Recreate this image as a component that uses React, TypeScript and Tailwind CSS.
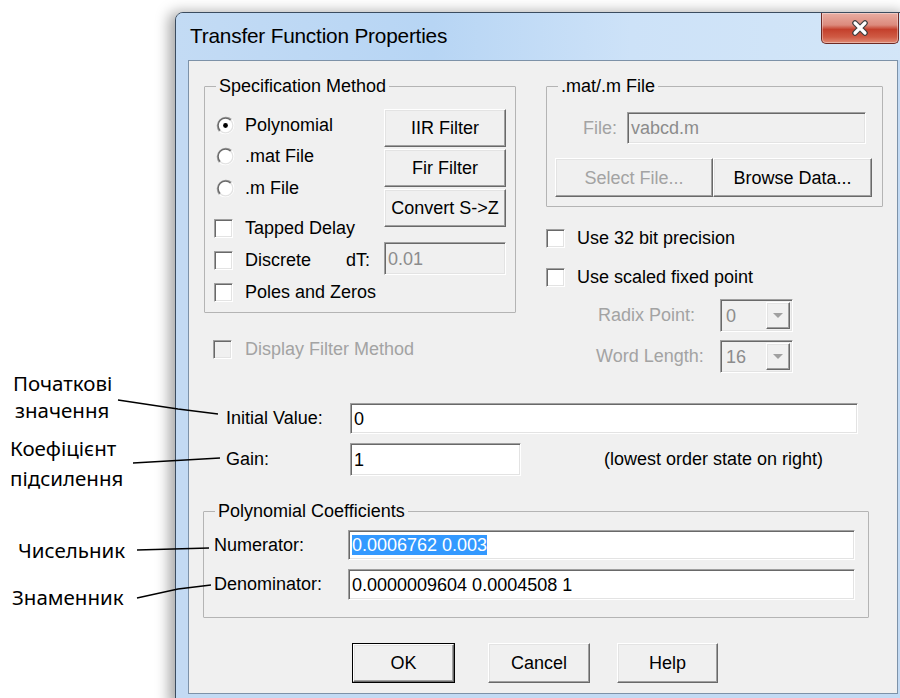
import React from "react";

const face = "font-['Liberation_Sans',Arial,sans-serif]";

const raised =
  "bg-[#f0f0f0] border border-t-white border-l-white border-r-[#696969] border-b-[#696969] shadow-[inset_-1px_-1px_0_#a0a0a0,inset_1px_1px_0_#e3e3e3]";
const sunken =
  "border border-t-[#a0a0a0] border-l-[#a0a0a0] border-r-white border-b-white shadow-[inset_1px_1px_0_#696969,inset_-1px_-1px_0_#e3e3e3]";

type BtnProps = {
  label: string;
  className?: string;
  disabled?: boolean;
};

function Button({ label, className = "", disabled = false }: BtnProps) {
  return (
    <button
      type="button"
      className={`${raised} flex items-center justify-center leading-none ${
        disabled ? "text-[#a3a3a3]" : "text-black"
      } ${className}`}
    >
      {label}
    </button>
  );
}

function Field({
  value,
  className = "",
  disabled = false,
  children,
}: {
  value?: string;
  className?: string;
  disabled?: boolean;
  children?: React.ReactNode;
}) {
  return (
    <div
      className={`${sunken} flex items-center pl-[3px] leading-none ${
        disabled ? "bg-[#f0f0f0] text-[#8c8c8c]" : "bg-white text-black"
      } ${className}`}
    >
      {children ?? value}
    </div>
  );
}

function CheckBox({ disabled = false }: { disabled?: boolean }) {
  return (
    <div
      className={`${sunken} w-[19px] h-[19px] shrink-0 ${
        disabled ? "bg-[#f0f0f0]" : "bg-white"
      }`}
    />
  );
}

function Radio({ checked = false }: { checked?: boolean }) {
  return (
    <svg width="19" height="19" viewBox="0 0 19 19" className="shrink-0">
      <circle cx="9.5" cy="9.5" r="8.5" fill="#fff" />
      <path d="M3.5 15.5A8.5 8.5 0 0 1 15.5 3.5" fill="none" stroke="#a0a0a0" strokeWidth="1.3" />
      <path d="M15.5 3.5A8.5 8.5 0 0 1 3.5 15.5" fill="none" stroke="#ffffff" strokeWidth="1.3" />
      <path d="M4.3 14.7A7.3 7.3 0 0 1 14.7 4.3" fill="none" stroke="#696969" strokeWidth="1.3" />
      <path d="M14.7 4.3A7.3 7.3 0 0 1 4.3 14.7" fill="none" stroke="#e3e3e3" strokeWidth="1.3" />
      {checked && <circle cx="9.5" cy="9.5" r="2.4" fill="#000" />}
    </svg>
  );
}

function Combo({ value }: { value: string }) {
  return (
    <div className={`${sunken} bg-[#f0f0f0] w-[73px] h-[33px] flex items-stretch p-[2px]`}>
      <div className="flex-1 flex items-center pl-[3px] text-[#8c8c8c] leading-none">{value}</div>
      <div className={`${raised} w-[24px] flex items-center justify-center`}>
        <svg width="10" height="6" viewBox="0 0 10 6">
          <path d="M0 0h10L5 5z" fill="#a0a0a0" />
        </svg>
      </div>
    </div>
  );
}

function Group({
  title,
  className = "",
  children,
}: {
  title: string;
  className?: string;
  children: React.ReactNode;
}) {
  return (
    <fieldset className={`border border-[#b4b4b4] rounded-[1px] ${className}`}>
      <legend className="ml-[11px] px-[3px] leading-[20px] text-black">{title}</legend>
      {children}
    </fieldset>
  );
}

function CloseButton() {
  return (
    <div className="mr-[11px] ml-auto self-start w-[78px] h-[31px] rounded-b-[5px] border border-t-0 border-[#6e2a24] bg-[linear-gradient(180deg,#e9aea3_0%,#dc8a7c_40%,#c4402c_55%,#cf5a44_80%,#e08a74_100%)] shadow-[inset_0_0_0_1px_rgba(255,255,255,0.35)] flex items-center justify-center">
      <svg width="22" height="18" viewBox="0 0 22 18">
        <path d="M6 4l10 10M16 4L6 14" stroke="#3c3c3c" strokeWidth="5.5" strokeLinecap="round" />
        <path d="M6 4l10 10M16 4L6 14" stroke="#ffffff" strokeWidth="3.2" strokeLinecap="round" />
      </svg>
    </div>
  );
}

function Callouts() {
  const label = "absolute font-['Noto_Sans',sans-serif] text-[20.5px] leading-[24px] text-black";
  return (
    <div className="absolute inset-0 pointer-events-none">
      <div className={`${label} left-[13px] top-[371px]`}>Початкові</div>
      <div className={`${label} left-[15px] top-[398px]`}>значення</div>
      <div className={`${label} left-[10px] top-[436px]`}>Коефіцієнт</div>
      <div className={`${label} left-[10px] top-[466px]`}>підсилення</div>
      <div className={`${label} left-[18px] top-[538px]`}>Чисельник</div>
      <div className={`${label} left-[12px] top-[585px]`}>Знаменник</div>
      <svg width="900" height="698" className="absolute left-0 top-0">
        <g stroke="#000" strokeWidth="1.3" fill="none">
          <path d="M118 400L178 409L218 414" />
          <path d="M133 463L220 458" />
          <path d="M137 550L209 548" />
          <path d="M137 598L178 589L211 585" />
        </g>
      </svg>
    </div>
  );
}

export default function App() {
  return (
    <div className={`relative w-[900px] h-[698px] overflow-hidden bg-white ${face} text-[18px]`}>
      <div className="ml-[175px] mt-[12px] w-[736px] rounded-t-[8px] border border-[#3b4c5f] bg-[#c3daf3] shadow-[-6px_0_14px_rgba(0,0,0,0.35)]">
        {/* title bar */}
        <div className="h-[47px] flex items-center pl-[14px] rounded-t-[7px] bg-[linear-gradient(90deg,#c3dbf4_0%,#b7d5f4_35%,#cde2f8_62%,#d3e6f8_100%)]">
          <span className="text-[20.8px] leading-none text-black tracking-[-0.2px]">
            Transfer Function Properties
          </span>
          <CloseButton />
        </div>

        {/* client area */}
        <div className="mx-[12px] border border-[#7d92a8] bg-[#f0f0f0] h-[634px] text-black">
          <div className="flex items-start pt-[15px]">
            {/* left column */}
            <div className="ml-[15px] w-[312px]">
              <Group title="Specification Method" className="h-[237px]">
                <div className="flex pt-[13px]">
                  <div className="ml-[9px] w-[170px]">
                    <div className="h-[32px] flex items-center pl-[2px] gap-[10px]">
                      <Radio checked />
                      <span>Polynomial</span>
                    </div>
                    <div className="h-[30px] flex items-center pl-[2px] gap-[10px]">
                      <Radio />
                      <span>.mat File</span>
                    </div>
                    <div className="h-[34px] flex items-center pl-[2px] gap-[10px]">
                      <Radio />
                      <span>.m File</span>
                    </div>
                    <div className="mt-[7px] h-[32px] flex items-center gap-[12px]">
                      <CheckBox />
                      <span>Tapped Delay</span>
                    </div>
                    <div className="h-[32px] flex items-center gap-[12px] pr-[14px]">
                      <CheckBox />
                      <span>Discrete</span>
                      <span className="ml-auto">dT:</span>
                    </div>
                    <div className="h-[32px] flex items-center gap-[12px]">
                      <CheckBox />
                      <span>Poles and Zeros</span>
                    </div>
                  </div>
                  <div className="w-[122px] flex flex-col">
                    <Button label="IIR Filter" className="h-[38px]" />
                    <Button label="Fir Filter" className="h-[38px] mt-[2px]" />
                    <Button label="Convert S->Z" className="h-[38px] mt-[2px]" />
                    <Field value="0.01" disabled className="h-[33px] mt-[15px]" />
                  </div>
                </div>
              </Group>
              <div className="mt-[24px] h-[24px] pl-[9px] flex items-center gap-[13px] text-[#a3a3a3]">
                <CheckBox disabled />
                <span>Display Filter Method</span>
              </div>
            </div>

            {/* right column */}
            <div className="ml-[30px] w-[337px]">
              <Group title=".mat/.m File" className="h-[131px]">
                <div className="mt-[16px] h-[32px] flex items-center">
                  <span className="ml-[36px] w-[44px] text-[#a3a3a3]">File:</span>
                  <Field value="vabcd.m" disabled className="w-[239px] h-[32px]" />
                </div>
                <div className="mt-[14px] flex ml-[8px]">
                  <Button label="Select File..." disabled className="w-[158px] h-[39px]" />
                  <Button label="Browse Data..." className="w-[159px] h-[39px]" />
                </div>
              </Group>
              <div className="mt-[18px] h-[26px] flex items-center gap-[12px]">
                <CheckBox />
                <span>Use 32 bit precision</span>
              </div>
              <div className="mt-[13px] h-[26px] flex items-center gap-[12px]">
                <CheckBox />
                <span>Use scaled fixed point</span>
              </div>
              <div className="mt-[9px] flex items-center">
                <span className="ml-[52px] w-[122px] text-[#a3a3a3]">Radix Point:</span>
                <Combo value="0" />
              </div>
              <div className="mt-[8px] flex items-center">
                <span className="ml-[50px] w-[124px] text-[#a3a3a3]">Word Length:</span>
                <Combo value="16" />
              </div>
            </div>
          </div>

          {/* state rows */}
          <div className="mt-[30px] flex items-center">
            <span className="ml-[37px] w-[124px]">Initial Value:</span>
            <Field value="0" className="w-[508px] h-[31px]" />
          </div>
          <div className="mt-[9px] flex items-center">
            <span className="ml-[37px] w-[124px]">Gain:</span>
            <Field value="1" className="w-[171px] h-[33px]" />
            <span className="ml-[83px]">(lowest order state on right)</span>
          </div>

          <Group title="Polynomial Coefficients" className="mt-[25px] ml-[14px] w-[666px] h-[117px]">
            <div className="mt-[9px] flex items-center">
              <span className="ml-[10px] w-[134px]">Numerator:</span>
              <Field className="w-[507px] h-[30px]">
                <span className="bg-[#3399ff] text-white leading-[20px]">0.0006762 0.003</span>
              </Field>
            </div>
            <div className="mt-[9px] flex items-center">
              <span className="ml-[10px] w-[134px]">Denominator:</span>
              <Field value="0.0000009604 0.0004508 1" className="w-[507px] h-[31px]" />
            </div>
          </Group>

          {/* dialog buttons */}
          <div className="mt-[25px] flex">
            <div className="ml-[163px] border border-black">
              <Button label="OK" className="w-[101px] h-[38px]" />
            </div>
            <Button label="Cancel" className="ml-[33px] w-[102px] h-[40px]" />
            <Button label="Help" className="ml-[27px] w-[101px] h-[40px]" />
          </div>
        </div>
        <div className="h-[12px]" />
      </div>
      <Callouts />
    </div>
  );
}
